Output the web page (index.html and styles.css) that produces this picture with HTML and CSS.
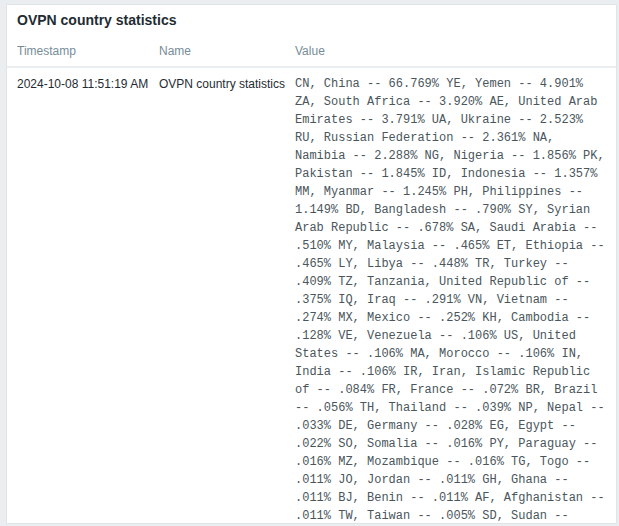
FILE: index.html
```html
<!DOCTYPE html>
<html>
<head>
<meta charset="utf-8">
<link rel="stylesheet" href="styles.css">
</head>
<body>
<div class="widget">
  <div class="widget-head">OVPN country statistics</div>
  <div class="widget-body">
    <div class="thead">
      <div class="cell c1">Timestamp</div>
      <div class="cell c2">Name</div>
      <div class="cell c3">Value</div>
    </div>
    <div class="trow">
      <div class="cell c1">2024-10-08 11:51:19 AM</div>
      <div class="cell c2">OVPN country statistics</div>
      <div class="cell c3 mono">CN, China -- 66.769% YE, Yemen -- 4.901% ZA, South Africa -- 3.920% AE, United Arab Emirates -- 3.791% UA, Ukraine -- 2.523% RU, Russian Federation -- 2.361% NA, Namibia -- 2.288% NG, Nigeria -- 1.856% PK, Pakistan -- 1.845% ID, Indonesia -- 1.357% MM, Myanmar -- 1.245% PH, Philippines -- 1.149% BD, Bangladesh -- .790% SY, Syrian Arab Republic -- .678% SA, Saudi Arabia -- .510% MY, Malaysia -- .465% ET, Ethiopia -- .465% LY, Libya -- .448% TR, Turkey -- .409% TZ, Tanzania, United Republic of -- .375% IQ, Iraq -- .291% VN, Vietnam -- .274% MX, Mexico -- .252% KH, Cambodia -- .128% VE, Venezuela -- .106% US, United States -- .106% MA, Morocco -- .106% IN, India -- .106% IR, Iran, Islamic Republic of -- .084% FR, France -- .072% BR, Brazil -- .056% TH, Thailand -- .039% NP, Nepal -- .033% DE, Germany -- .028% EG, Egypt -- .022% SO, Somalia -- .016% PY, Paraguay -- .016% MZ, Mozambique -- .016% TG, Togo -- .011% JO, Jordan -- .011% GH, Ghana -- .011% BJ, Benin -- .011% AF, Afghanistan -- .011% TW, Taiwan -- .005% SD, Sudan -- .005% KE, Kenya -- .005% LB, Lebanon -- .005%</div>
    </div>
  </div>
</div>
</body>
</html>
```

FILE: styles.css
```css
html, body {
  margin: 0;
  padding: 0;
  background: #ebeef0;
  height: 100%;
  overflow: hidden;
}
body {
  font-family: "Liberation Sans", Arial, sans-serif;
  font-size: 12px;
  color: #1f2c33;
}
.widget {
  margin: 4px 0 0 6px;
  width: 609px;
  height: 518px;
  background: #ffffff;
  border: 1px solid #dfe4e7;
  overflow: hidden;
}
.widget-head {
  font-size: 14px;
  font-weight: bold;
  line-height: 18px;
  padding: 6px 10px 0 10px;
  height: 24px;
}
.thead {
  display: grid;
  grid-template-columns: 142px 136px 314px;
  padding-left: 10px;
  color: #768d99;
  line-height: 18px;
  padding-top: 7px;
  padding-bottom: 6px;
  border-bottom: 2px solid #ebeef0;
}
.trow {
  display: grid;
  grid-template-columns: 142px 136px 314px;
  padding-left: 10px;
  line-height: 18px;
  padding-top: 7px;
}
.cell {
  white-space: nowrap;
}
.mono {
  white-space: normal;
  font-family: "Courier New", "Nimbus Mono PS", "Nimbus Mono L", "FreeMono", "Liberation Mono", monospace;
  font-size: 12px;
  line-height: 18px;
  color: #4a565c;
}
```
